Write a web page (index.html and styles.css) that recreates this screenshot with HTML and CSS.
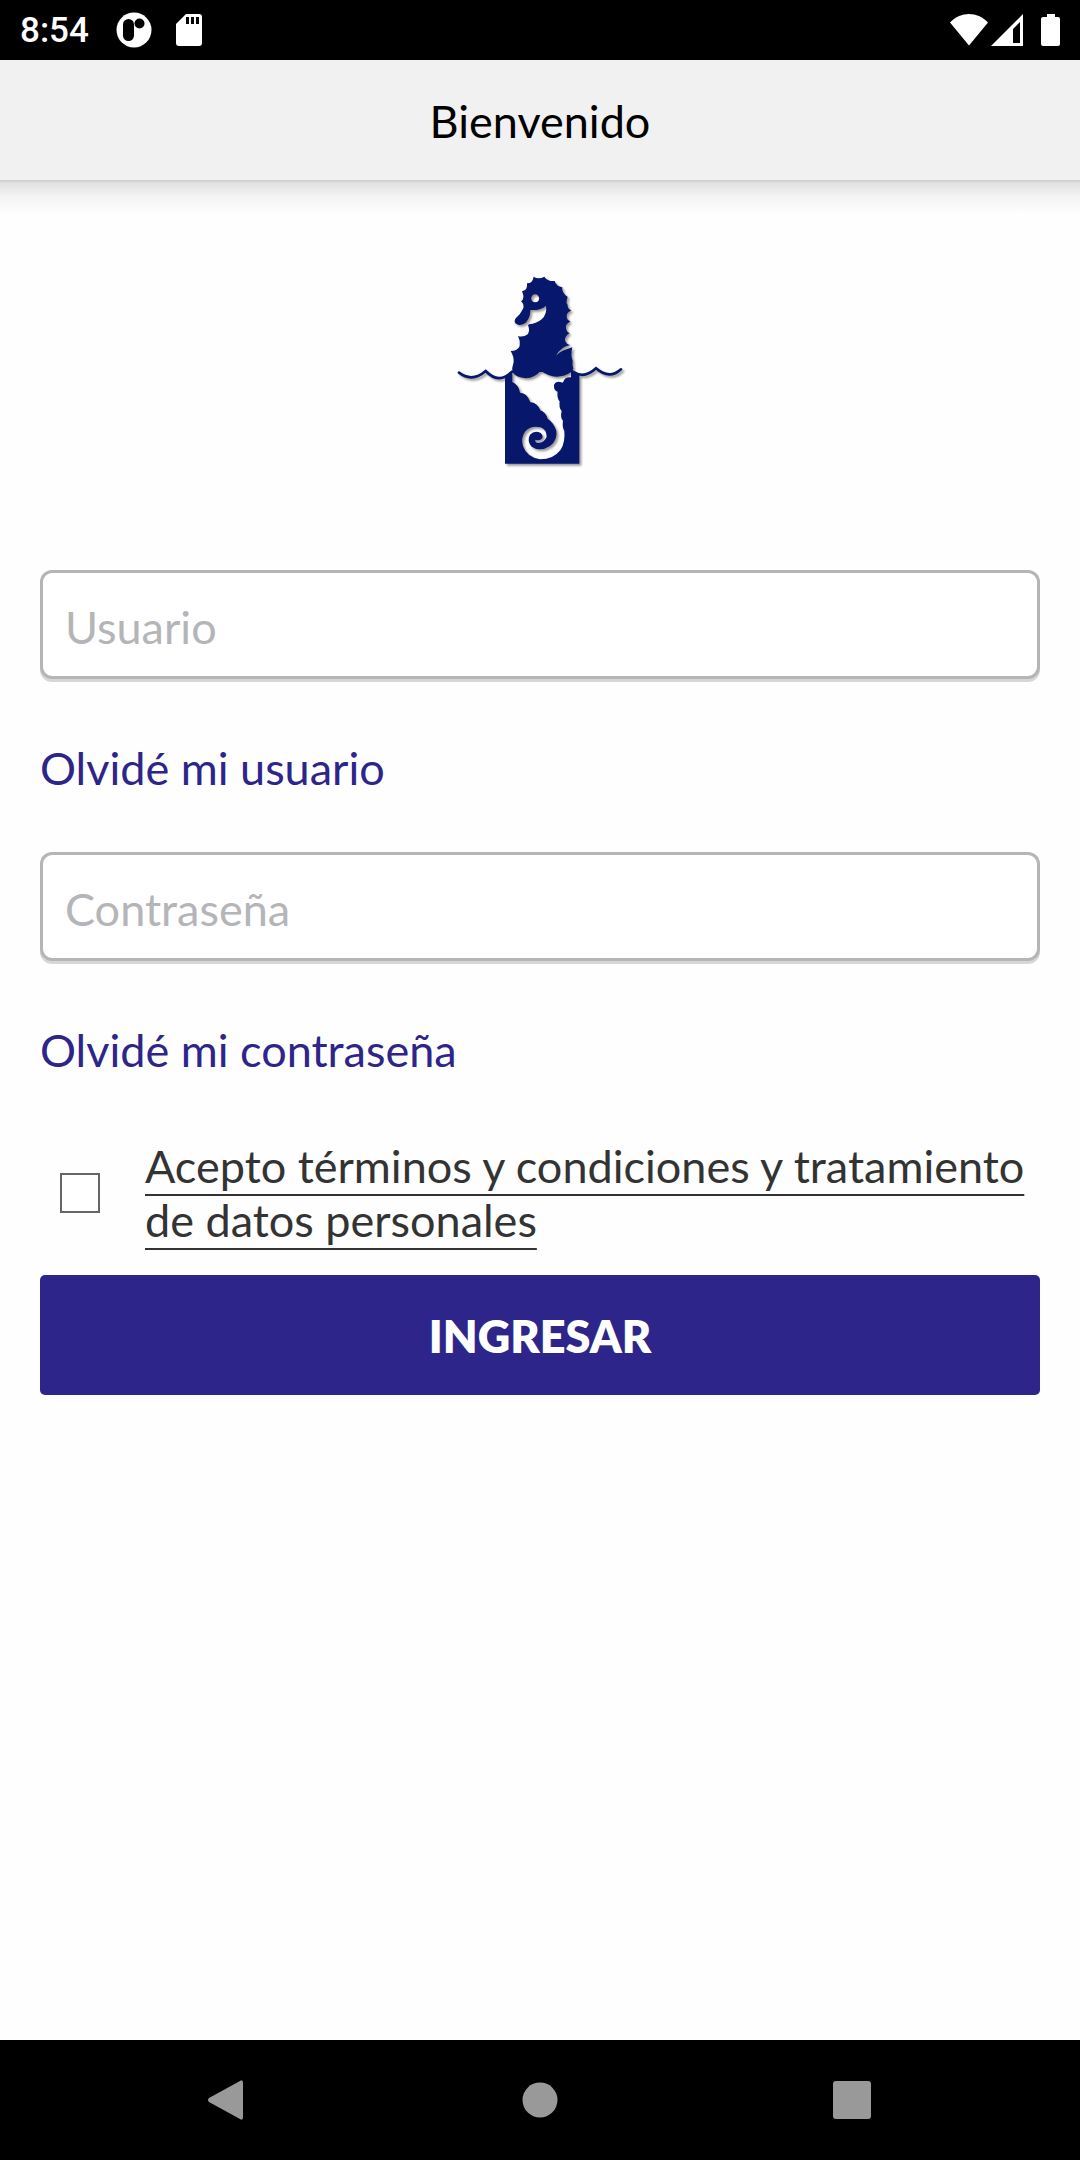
FILE: index.html
```html
<!DOCTYPE html>
<html lang="es">
<head>
    <meta charset="UTF-8">
    <meta name="viewport" content="width=device-width, initial-scale=1.0">
    <title>Bienvenido</title>
    <link rel="stylesheet" href="styles.css">
</head>
<body>
    <!-- Barra de estado -->
    <div class="status-bar">
        <span class="time">8:54</span>
        <svg class="status-app" width="36" height="36" viewBox="0 0 36 36">
            <circle cx="18" cy="18" r="17.5" fill="#fff"/>
            <rect x="7" y="7" width="11" height="22" rx="5.5"/>
            <circle cx="23.500" cy="11.500" r="5"/>
        </svg>
        <svg class="status-sd" width="26" height="32" viewBox="0 0 26 32">
            <path fill="#fff" d="M10 0h13q3 0 3 3v26q0 3-3 3H3q-3 0-3-3V10z"/>
            <path d="M10 3h3v7h-3zM15 3h3v7h-3zM20 3h3v7h-3z"/>
        </svg>
        <div class="status-right">
            <svg width="38" height="32" viewBox="0 0 38 32">
                <path fill="#fff" d="M0 8.500C11-2.800 27-2.800 38 8.500L19 31.500z"/>
            </svg>
            <svg width="32" height="32" viewBox="0 0 32 32">
                <path fill="#fff" fill-rule="evenodd" d="M32 0v32H0zM29 8l-7 7v14h7z"/>
            </svg>
            <svg class="battery" width="19" height="32" viewBox="0 0 19 32">
                <path fill="#fff" d="M6 0h8v3h3q2 0 2 2v25q0 2-2 2H2q-2 0-2-2V5q0-2 2-2h4z"/>
            </svg>
        </div>
    </div>

    <header class="header">
        <h1>Bienvenido</h1>
    </header>

    <main class="content">
        <!-- Logo -->
        <svg class="logo" viewBox="0 0 600 660" role="img" aria-label="Logo">
            <g fill="#06176c">
                <!-- Caja con la cola -->
                <path fill-rule="evenodd" d="M195 350Q208 346 217 334L302 325L397 330Q405 342 418 345V611H195z
                    M217 336V366Q236 374 240 398Q262 399 271 427Q292 428 301 451Q317 457 323 476Q341 488 349 512Q353 540 330 558Q300 577 275 560Q260 543 270 524Q284 509 302 519Q313 530 303 538Q296 543 287 539Q283 544 290 548Q313 550 320 530Q320 509 302 502Q272 495 255 515Q242 534 249 559Q261 592 300 598Q340 598 362 569Q376 547 373 512Q366 502 369 482Q360 474 365 453Q356 445 359 424Q350 414 353 395Q341 392 342 375Q348 362 364 367Q370 370 371 362Q377 350 393 352V336z"/>
                <!-- Cuerpo -->
                <path d="M281 50Q295 60 313 50Q323 65 344 63Q348 79 367 82Q364 98 383 111Q376 127 383 135Q382 147 394 151Q379 159 380 169Q380 181 391 184Q375 194 378 204Q380 217 389 219Q373 230 375 241Q378 253 391 255Q362 260 348 287Q363 271 397 262Q391 286 398 302Q396 315 400 326L393 336Q375 350 350 350Q325 348 302 332Q285 353 257 355Q230 353 217 337Q215 324 221 306Q222 290 212 273Q233 273 239 258Q242 243 234 228Q250 233 264 222Q270 209 264 196L267 193Q288 192 305 178Q322 162 318 137Q302 152 271 150Q271 174 257 188Q238 201 226 190Q221 182 228 174Q242 162 250 145Q253 132 243 124Q256 116 246 94Q264 90 261 70Q277 71 281 50z
                    M285 103a12 12 0 1 0 1 0z" fill-rule="evenodd"/>
            </g>
            <!-- Olas -->
            <path class="waves" d="M57 338Q97 368 137 333Q177 375 216 335M398 335Q433 358 468 325Q508 360 543 328"/>
        </svg>

        <form class="login-form">
            <input class="field" type="text" placeholder="Usuario" aria-label="Usuario">
            <a class="forgot" href="#">Olvidé mi usuario</a>
            <input class="field" type="password" placeholder="Contraseña" aria-label="Contraseña">
            <a class="forgot" href="#">Olvidé mi contraseña</a>
            <div class="terms">
                <input type="checkbox" id="terms">
                <label for="terms">Acepto términos y condiciones y tratamiento de datos personales</label>
            </div>
            <button class="submit" type="submit">INGRESAR</button>
        </form>
    </main>

    <!-- Navegación inferior -->
    <nav class="bottom-nav">
        <button type="button" aria-label="Atrás">
            <svg width="40" height="40" viewBox="0 0 40 40"><path d="M32 1Q35-1 35 3V37Q35 41 32 39L1 22Q-1 20 1 18z"/></svg>
        </button>
        <button type="button" aria-label="Inicio">
            <svg width="40" height="40" viewBox="0 0 40 40"><circle cx="20" cy="20" r="17.5"/></svg>
        </button>
        <button type="button" aria-label="Recientes">
            <svg width="40" height="40" viewBox="0 0 40 40"><rect x="1" y="1" width="38" height="38" rx="3"/></svg>
        </button>
    </nav>
</body>
</html>
```
FILE: styles.css
```css
* {
    box-sizing: border-box;
}

body {
    margin: 0;
    min-height: 100vh;
    display: flex;
    flex-direction: column;
    background-color: #fefefe;
    font-family: Lato, sans-serif;
    font-size: 45px;
    line-height: 54px;
}

svg {
    display: block;
}

/* Barra de estado */
.status-bar {
    display: flex;
    align-items: center;
    height: 60px;
    padding: 0 20px;
    background-color: #000;
    color: #fff;
}

.time {
    padding-top: 2px;
    font-family: Roboto, sans-serif;
    font-size: 35px;
    font-weight: 500;
}

.status-app {
    margin-left: 27px;
}

.status-sd {
    margin-left: 24px;
}

.status-right {
    display: flex;
    gap: 3px;
    margin-left: auto;
}

.battery {
    margin-left: 15px;
}

/* Encabezado */
.header {
    display: flex;
    align-items: center;
    justify-content: center;
    height: 122px;
    background-color: #f1f1f1;
    border-bottom: 2px solid #d2d2d2;
    color: #000;
}

.header h1 {
    margin: 0;
    padding-top: 2px;
    font-size: 45px;
    font-weight: 400;
}

.content {
    flex: 1;
    padding: 0 40px;
    background-image: linear-gradient(#e0e0e0, #f4f4f4 15px, #fefefe 32px);
    background-repeat: no-repeat;
}

.logo {
    width: 200px;
    margin: 78px auto 90px;
    filter: drop-shadow(2px 2px 1px rgba(60, 50, 50, 0.5));
}

.waves {
    fill: none;
    stroke: #06176c;
    stroke-width: 8;
    stroke-linecap: round;
}

/* Formulario */
.login-form {
    display: flex;
    flex-direction: column;
}

.field {
    width: 100%;
    height: 109px;
    padding: 4px 22px 0;
    border: 3px solid #b4b5b7;
    border-radius: 12px;
    box-shadow: 0 3px 0 #d7d7d9;
    background-color: #fff;
    color: #333;
    font: inherit;
}

.field::placeholder {
    color: #b4b5b8;
    opacity: 1;
}

.forgot {
    align-self: flex-start;
    margin: 62px 0 57px;
    color: #2d2589;
    text-decoration: none;
}

.terms {
    display: flex;
    align-items: center;
    gap: 45px;
    margin: 5px 0 28px;
    padding-left: 20px;
}

.terms input {
    flex: none;
    appearance: none;
    width: 40px;
    height: 40px;
    margin: 0;
    border: 2px solid #666;
    background-color: #fff;
}

.terms input:checked {
    background-color: #2d2589;
}

.terms label {
    color: #333;
    text-decoration: underline;
    text-decoration-thickness: 2px;
    text-decoration-skip-ink: none;
    text-underline-offset: 11px;
}

.submit {
    height: 120px;
    padding: 2px 0 0;
    border: none;
    border-radius: 5px;
    background-color: #2d2589;
    color: #fff;
    font: 800 45px Lato, sans-serif;
}

/* Navegación inferior */
.bottom-nav {
    display: flex;
    justify-content: center;
    gap: 192px;
    height: 120px;
    background-color: #000;
}

.bottom-nav button {
    display: flex;
    align-items: center;
    justify-content: center;
    width: 120px;
    padding: 0;
    border: none;
    background: none;
    fill: #999;
}
```
